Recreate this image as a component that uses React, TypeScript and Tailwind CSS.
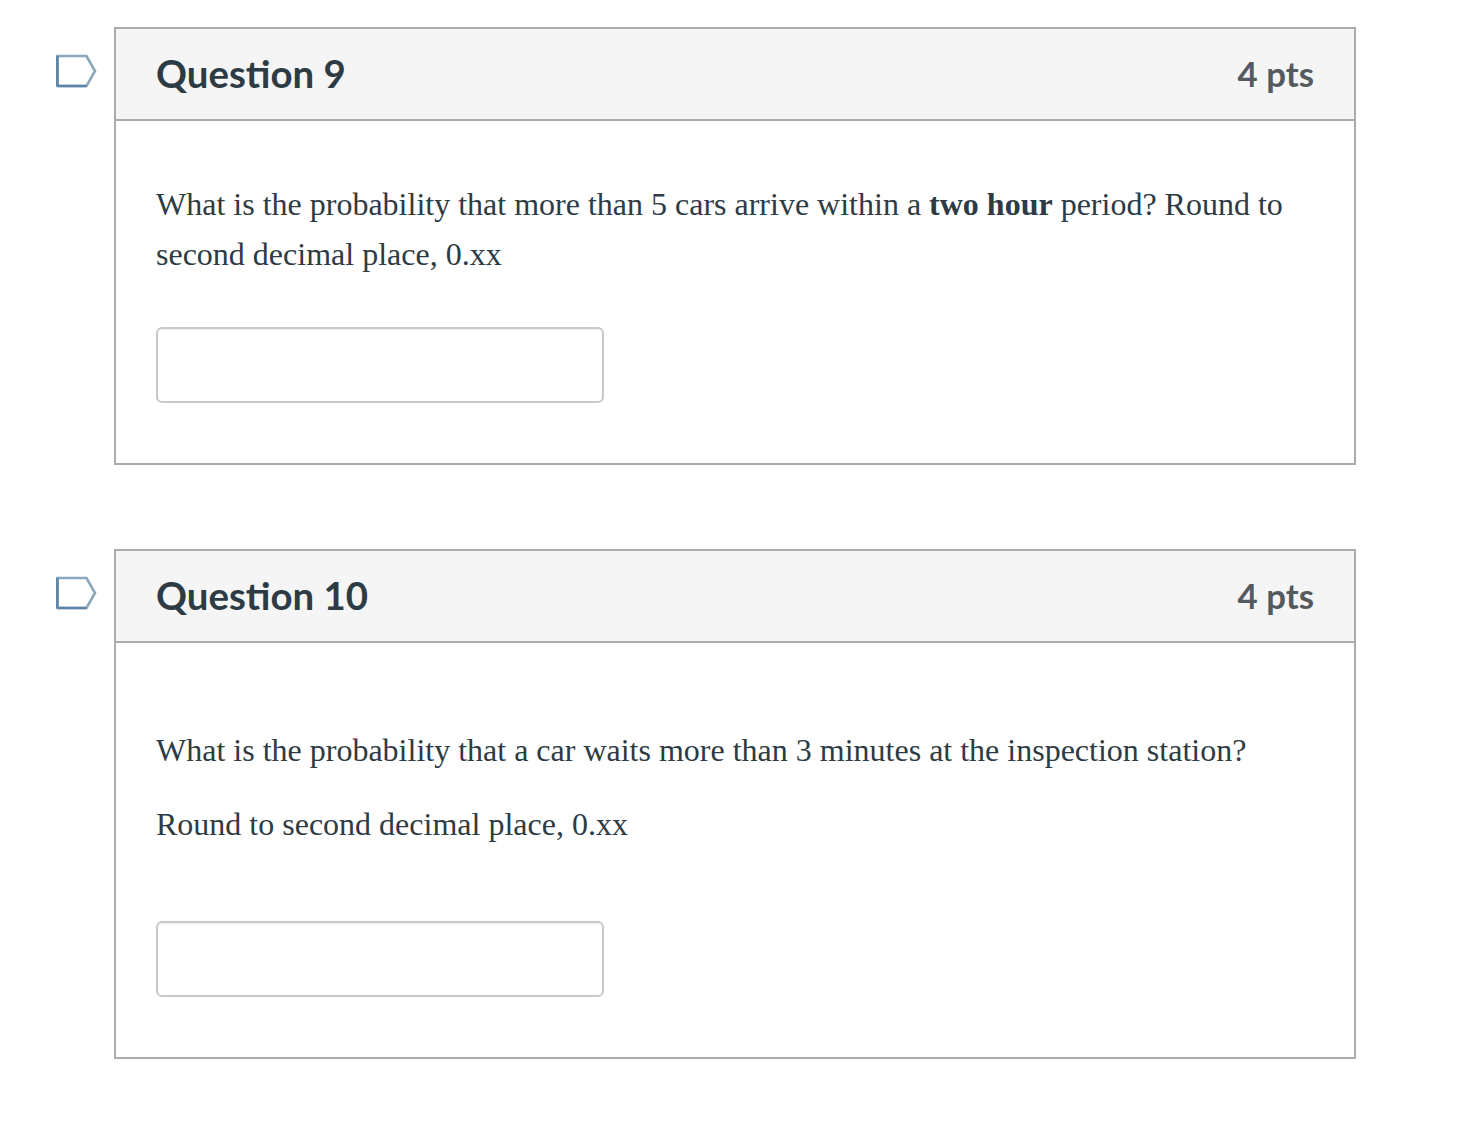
function Flag() {
  return (
    <svg width="42" height="34" viewBox="0 0 42 34" className="shrink-0 mt-[27px]" fill="none">
      <path d="M1.4 2 H30.5 L39 17 L30.5 32 H1.4 Z" fill="#fff" stroke="#8aa7be" strokeWidth="2.6" />
      <path d="M1.4 32 H30.5 M1.4 2 V32" stroke="#5d84a5" strokeWidth="2.6" />
    </svg>
  );
}

function Card({ n, h, children }: { n: number; h: number; children: React.ReactNode }) {
  return (
    <div className="flex items-start">
      <div className="w-[114px] shrink-0 pl-[56px]">
        <Flag />
      </div>
      <div className="w-[1242px] border-2 border-[#ababab] bg-white" style={{ height: h }}>
        <div className="h-[92px] bg-[#f5f5f5] border-b-2 border-[#ababab] flex items-center justify-between px-[40px] font-['Lato',sans-serif] font-bold">
          <span className="text-[38.4px] text-[#2d3b45]">Question {n}</span>
          <span className="text-[34.8px] text-[#555a5e]">4 pts</span>
        </div>
        <div className="px-[40px] font-['Liberation_Serif',serif] text-[32px] text-[#2d3b45]">
          {children}
        </div>
      </div>
    </div>
  );
}

function Answer() {
  return (
    <div className="w-[448px] h-[76px] rounded-[6px] border-2 border-[#c9c9c9] bg-white shadow-[inset_0_1px_2px_rgba(0,0,0,0.08)]" />
  );
}

export default function App() {
  return (
    <div className="w-[1468px] h-[1130px] bg-white pt-[27px] flex flex-col gap-[84px]">
      <Card n={9} h={438}>
        <p className="pt-[58px] leading-[50px]">
          What is the probability that more than 5 cars arrive within a <strong className="font-bold">two hour</strong> period? Round to second decimal place, 0.xx
        </p>
        <div className="mt-[48px]"><Answer /></div>
      </Card>
      <Card n={10} h={510}>
        <p className="pt-[82px] leading-[50px]">
          What is the probability that a car waits more than 3 minutes at the inspection station?
        </p>
        <p className="mt-[24px] leading-[50px]">Round to second decimal place, 0.xx</p>
        <div className="mt-[72px]"><Answer /></div>
      </Card>
    </div>
  );
}
